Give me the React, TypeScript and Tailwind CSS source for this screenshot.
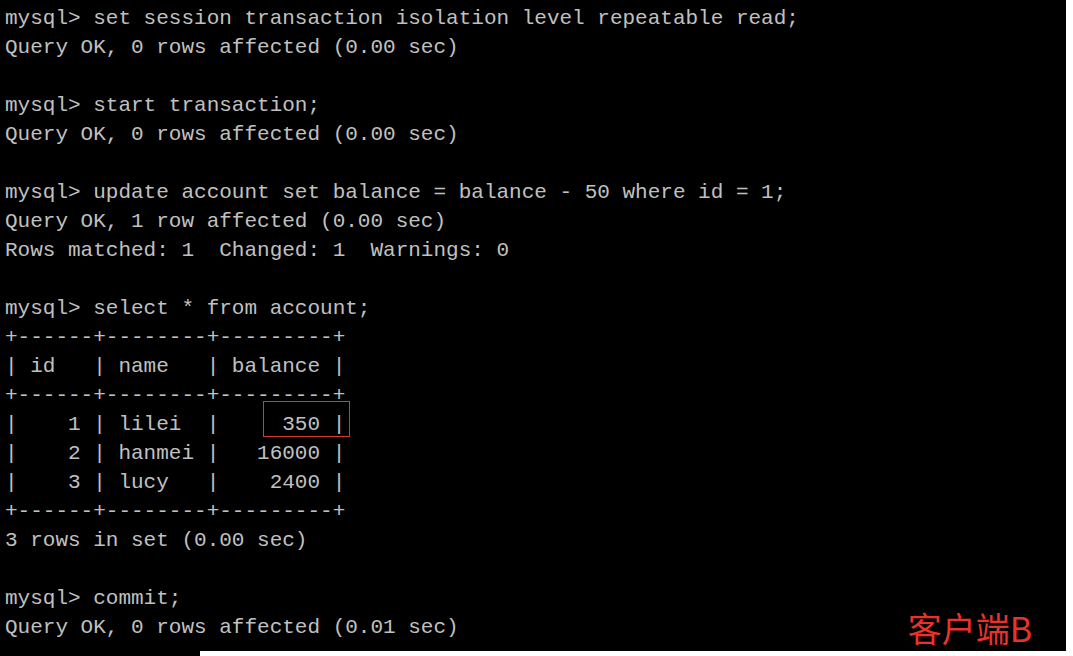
const LINES = [
  "mysql> set session transaction isolation level repeatable read;",
  "Query OK, 0 rows affected (0.00 sec)",
  "",
  "mysql> start transaction;",
  "Query OK, 0 rows affected (0.00 sec)",
  "",
  "mysql> update account set balance = balance - 50 where id = 1;",
  "Query OK, 1 row affected (0.00 sec)",
  "Rows matched: 1  Changed: 1  Warnings: 0",
  "",
  "mysql> select * from account;",
  "+------+--------+---------+",
  "| id   | name   | balance |",
  "+------+--------+---------+",
  "|    1 | lilei  |     350 |",
  "|    2 | hanmei |   16000 |",
  "|    3 | lucy   |    2400 |",
  "+------+--------+---------+",
  "3 rows in set (0.00 sec)",
  "",
  "mysql> commit;",
];

export default function App() {
  return (
    <div className="h-[656px] w-[1073px] overflow-hidden bg-white">
      <div
        className="relative h-[651px] w-[1066px] bg-black pl-[5px] pt-[4px] text-[21px] leading-[29px] text-[#c0c0c0]"
        style={{ fontFamily: '"Liberation Mono", monospace' }}
      >
        {LINES.map((line, i) => (
          <div key={i} className="h-[29px] whitespace-pre">
            {line}
          </div>
        ))}
        <div className="flex h-[29px] items-center whitespace-pre">
          <span>Query OK, 0 rows affected (0.01 sec)</span>
          <span
            className="ml-auto mr-[34px] text-[34px] leading-[29px] text-[#e8332c]"
            style={{ fontFamily: '"Noto Sans CJK SC", "Noto Sans", sans-serif' }}
          >
            客户端B
          </span>
        </div>
        {/* highlight on the changed balance */}
        <div className="absolute left-[263px] top-[401px] h-[36px] w-[87px] border-[1.5px] border-[#d23a3a]" />
      </div>
      <div className="h-[5px] w-[200px] bg-black" />
    </div>
  );
}
